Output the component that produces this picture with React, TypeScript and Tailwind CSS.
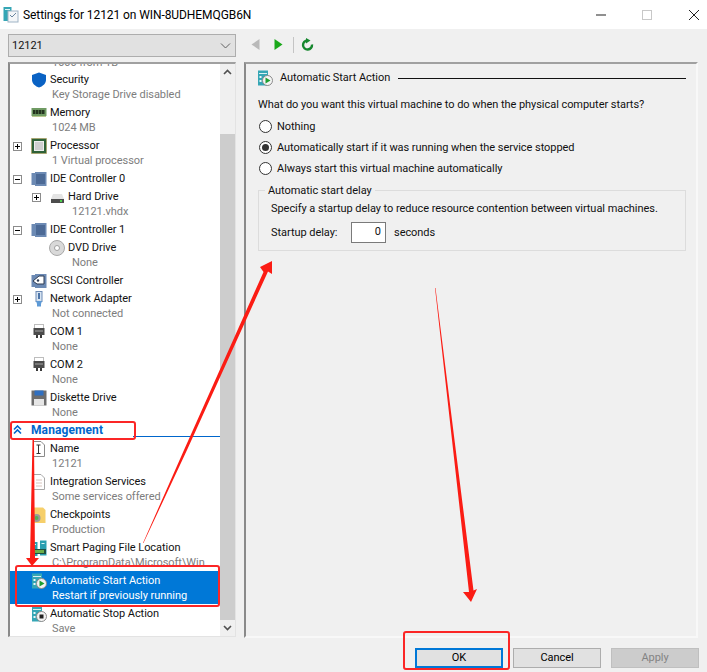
import type { ReactNode } from "react";

type IconName =
  | "shield" | "ram" | "cpu" | "ide" | "hdd" | "dvd" | "scsi" | "nic" | "com"
  | "floppy" | "name" | "integration" | "checkpoint" | "paging" | "start" | "stop";

function ServerGlyph({ badge }: { badge: ReactNode }) {
  return (
    <svg width="16" height="17" viewBox="0 0 16 17">
      <rect x="1" y="0.5" width="10" height="15" fill="#35a6b5" />
      <rect x="2" y="3" width="8" height="1" fill="#d8f0f3" />
      <rect x="2.5" y="6" width="2" height="2" fill="#e8f8fa" />
      <rect x="2.5" y="10" width="2" height="2" fill="#e8f8fa" />
      <circle cx="10.5" cy="10.5" r="5" fill="#f4f4f4" stroke="#8a8a8a" />
      {badge}
    </svg>
  );
}

function TreeIcon({ name }: { name: IconName }) {
  switch (name) {
    case "shield":
      return (
        <svg width="16" height="16" viewBox="0 0 16 16">
          <path d="M8 0.5 L15 3 V8 C15 11.5 11.5 14.5 8 15.5 C4.5 14.5 1 11.5 1 8 V3 Z" fill="#0a62c4" />
        </svg>
      );
    case "ram":
      return (
        <svg width="16" height="16" viewBox="0 0 16 16">
          <rect x="0.5" y="3" width="15" height="8" fill="#6f9a63" />
          <rect x="2" y="5" width="2.5" height="4" fill="#23331f" />
          <rect x="5" y="5" width="2.5" height="4" fill="#23331f" />
          <rect x="8" y="5" width="2.5" height="4" fill="#23331f" />
          <rect x="11" y="5" width="2.5" height="4" fill="#23331f" />
          <rect x="1" y="11" width="14" height="1" fill="#b9c88e" />
        </svg>
      );
    case "cpu":
      return (
        <svg width="16" height="16" viewBox="0 0 16 16">
          <rect x="0.5" y="0.5" width="15" height="15" fill="#2f6238" stroke="#b49a4a" strokeDasharray="1 1" />
          <rect x="3.5" y="3.5" width="9" height="9" fill="#cfcfcf" stroke="#eeeeee" />
        </svg>
      );
    case "ide":
      return (
        <svg width="16" height="16" viewBox="0 0 16 16">
          <path d="M0.5 2 H4 V1 H15.5 V15 H4 V14 H0.5 Z" fill="#6c8ab4" />
          <rect x="5" y="3" width="9" height="10" fill="#4c6a96" />
        </svg>
      );
    case "hdd":
      return (
        <svg width="15" height="16" viewBox="0 0 15 16">
          <path d="M3 5 H12 L14 10 H1 Z" fill="#e4e4e4" />
          <rect x="1" y="10" width="13" height="4" fill="#4d4d4d" />
          <rect x="10" y="11" width="2" height="2" fill="#4fd34f" />
        </svg>
      );
    case "dvd":
      return (
        <svg width="16" height="16" viewBox="0 0 16 16">
          <circle cx="8" cy="8" r="7.5" fill="#d9d9d9" stroke="#a8a8a8" />
          <circle cx="8" cy="8" r="2.5" fill="#ffffff" stroke="#a0a0a0" />
        </svg>
      );
    case "scsi":
      return (
        <svg width="16" height="16" viewBox="0 0 16 16">
          <path d="M0.5 2 H4 V1 H15.5 V15 H4 V14 H0.5 Z" fill="#6c8ab4" />
          <path d="M2 8 L8 3 H13 V11 H6 Z" fill="#ffffff" stroke="#2d3b52" />
          <circle cx="7" cy="7.5" r="1.2" fill="#2d3b52" />
        </svg>
      );
    case "nic":
      return (
        <svg width="16" height="16" viewBox="0 0 16 16">
          <rect x="5" y="0.5" width="6" height="10" fill="#d7e4f2" stroke="#6c8ab4" />
          <rect x="7" y="2" width="2" height="6" fill="#4c74a8" />
          <path d="M5 10 H11 L10 13 V15.5 H6 V13 Z" fill="#5e9ad6" />
        </svg>
      );
    case "com":
      return (
        <svg width="16" height="16" viewBox="0 0 16 16">
          <rect x="3.5" y="0.5" width="9" height="4" fill="#ffffff" stroke="#7a7a7a" strokeDasharray="1 1" />
          <rect x="2.5" y="4" width="11" height="7" fill="#4b4b4b" />
          <rect x="4" y="6.5" width="8" height="1" fill="#a5a5a5" />
          <rect x="5" y="11" width="2" height="3" fill="#3a3a3a" />
          <rect x="9" y="11" width="2" height="3" fill="#3a3a3a" />
        </svg>
      );
    case "floppy":
      return (
        <svg width="16" height="16" viewBox="0 0 16 16">
          <path d="M0.5 0.5 H15.5 V15.5 H0.5 Z" fill="#6d6d6d" />
          <rect x="3.5" y="0.5" width="9" height="5" fill="#2f6fc0" />
          <rect x="3" y="9" width="10" height="6.5" fill="#e6e6e6" />
        </svg>
      );
    case "name":
      return (
        <svg width="12" height="16" viewBox="0 0 12 16">
          <path d="M0.5 0.5 H8 L11.5 4 V15.5 H0.5 Z" fill="#ffffff" stroke="#8a8a8a" />
          <path d="M3.5 4 H7.5 M3.5 12.5 H7.5 M5.5 4 V12.5" fill="none" stroke="#333333" />
        </svg>
      );
    case "integration":
      return (
        <svg width="12" height="16" viewBox="0 0 12 16">
          <path d="M0.5 0.5 H8 L11.5 4 V15.5 H0.5 Z" fill="#ffffff" stroke="#a8a8a8" />
          <path d="M3 6 H9 M3 9 H9 M3 12 H9" fill="none" stroke="#d7c4bd" />
        </svg>
      );
    case "checkpoint":
      return (
        <svg width="14" height="17" viewBox="0 0 14 17">
          <path d="M1 0.5 H11 L13.5 3 V16 H1 Z" fill="#f6cf6a" />
          <circle cx="4.5" cy="11" r="4" fill="#9a9a9a" />
          <circle cx="4.5" cy="11" r="2" fill="#54b054" />
        </svg>
      );
    case "paging":
      return (
        <svg width="16" height="17" viewBox="0 0 16 17">
          <rect x="0.5" y="2" width="6" height="14" fill="#2a9fb0" />
          <rect x="9" y="0.5" width="6.5" height="15" fill="#2a9fb0" />
          <rect x="2" y="4" width="3" height="1" fill="#d9f2f5" />
          <rect x="10.5" y="3" width="3" height="1" fill="#d9f2f5" />
          <rect x="1" y="9" width="14" height="5" fill="#1f4f3f" />
          <rect x="3" y="10" width="10" height="3" fill="#6fb04a" />
        </svg>
      );
    case "start":
      return <ServerGlyph badge={<path d="M8.5 7.5 L13.5 10.5 L8.5 13.5 Z" fill="#1f9e2f" />} />;
    case "stop":
      return <ServerGlyph badge={<rect x="8.5" y="8.5" width="4" height="4" fill="#222222" />} />;
  }
}

function Expander({ open }: { open: boolean }) {
  return (
    <span className="relative block w-[9px] h-[9px] border border-[#8c8c8c] bg-white">
      <span className="absolute left-[1px] top-[3px] w-[5px] h-px bg-black" />
      {!open && <span className="absolute left-[3px] top-[1px] w-px h-[5px] bg-black" />}
    </span>
  );
}

interface TreeItem {
  title: string;
  sub?: string;
  icon: IconName;
  toggle?: "open" | "closed";
  nested?: boolean;
  selected?: boolean;
}

const hardwareItems: TreeItem[] = [
  { title: "Security", sub: "Key Storage Drive disabled", icon: "shield" },
  { title: "Memory", sub: "1024 MB", icon: "ram" },
  { title: "Processor", sub: "1 Virtual processor", icon: "cpu", toggle: "closed" },
  { title: "IDE Controller 0", icon: "ide", toggle: "open" },
  { title: "Hard Drive", sub: "12121.vhdx", icon: "hdd", toggle: "closed", nested: true },
  { title: "IDE Controller 1", icon: "ide", toggle: "open" },
  { title: "DVD Drive", sub: "None", icon: "dvd", nested: true },
  { title: "SCSI Controller", icon: "scsi" },
  { title: "Network Adapter", sub: "Not connected", icon: "nic", toggle: "closed" },
  { title: "COM 1", sub: "None", icon: "com" },
  { title: "COM 2", sub: "None", icon: "com" },
  { title: "Diskette Drive", sub: "None", icon: "floppy" },
];

const managementItems: TreeItem[] = [
  { title: "Name", sub: "12121", icon: "name" },
  { title: "Integration Services", sub: "Some services offered", icon: "integration" },
  { title: "Checkpoints", sub: "Production", icon: "checkpoint" },
  { title: "Smart Paging File Location", sub: "C:\\ProgramData\\Microsoft\\Win", icon: "paging" },
  { title: "Automatic Start Action", sub: "Restart if previously running", icon: "start", selected: true },
  { title: "Automatic Stop Action", sub: "Save", icon: "stop" },
];

function TreeRow({ item }: { item: TreeItem }) {
  const textColor = item.selected ? "text-white" : "text-[#111111]";
  const subColor = item.selected ? "text-white" : "text-[#7d7d7d]";
  return (
    <div className={item.selected ? "bg-[#0078d7]" : ""}>
      <div className="flex items-center h-[18px] pt-[2px]">
        <div className={item.nested ? "w-[22px] shrink-0" : "w-[3px] shrink-0"} />
        <div className={`${item.nested ? "w-[14px]" : "w-[15px]"} shrink-0`}>{item.toggle && <Expander open={item.toggle === "open"} />}</div>
        <div className="w-[22px] shrink-0 flex justify-center"><TreeIcon name={item.icon} /></div>
        <span className={`whitespace-nowrap ${textColor}`}>{item.title}</span>
      </div>
      {item.sub && (
        <div className={`-mt-[1px] h-[16px] leading-[15px] whitespace-nowrap ${subColor} ${item.nested ? "pl-[62px]" : "pl-[42px]"}`}>
          {item.sub}
        </div>
      )}
    </div>
  );
}

function TreePanel() {
  return (
    <div className="relative mt-[5px] h-[575px] border-t-2 border-l-2 border-r border-b border-t-[#a0a0a0] border-l-[#8a8a8a] border-r-[#e3e3e3] border-b-[#e3e3e3] bg-white overflow-hidden flex">
      <div className="flex-1 min-w-0 overflow-hidden">
        {/* previous item, scrolled nearly out of view */}
        <div className="-mt-[9px] h-[15px] leading-[15px] pl-[42px] whitespace-nowrap text-[#7d7d7d]">1000 from 1B</div>
        {hardwareItems.map((item) => (
          <TreeRow key={item.title} item={item} />
        ))}
        <div className="flex items-center h-[18px] pl-[3px]">
          <svg width="9" height="10" viewBox="0 0 9 10" className="mr-[9px]">
            <path d="M1 4.5 L4.5 1 L8 4.5 M1 8.5 L4.5 5 L8 8.5" fill="none" stroke="#0066cc" strokeWidth="1.6" />
          </svg>
          <span className="font-bold text-[12px] text-[#0066cc] tracking-[0.1px]">Management</span>
          <div className="flex-1 h-px bg-[#0066cc] mt-[13px] ml-[30px]" />
        </div>
        {managementItems.map((item) => (
          <TreeRow key={item.title} item={item} />
        ))}
      </div>
      <div className="w-[15px] shrink-0 bg-[#f0f0f0] flex flex-col">
        <div className="h-[16px] flex items-center justify-center">
          <svg width="9" height="6" viewBox="0 0 9 6"><path d="M1 5 L4.5 1.5 L8 5" fill="none" stroke="#505050" strokeWidth="1.6" /></svg>
        </div>
        <div className="h-[54px]" />
        <div className="flex-1 bg-[#cdcdcd]" />
        <div className="h-[16px] flex items-center justify-center">
          <svg width="9" height="6" viewBox="0 0 9 6"><path d="M1 1 L4.5 4.5 L8 1" fill="none" stroke="#505050" strokeWidth="1.6" /></svg>
        </div>
      </div>
    </div>
  );
}

function Radio({ label, checked }: { label: string; checked?: boolean }) {
  return (
    <div className="flex items-center h-[21px]">
      <span className="w-[13px] h-[13px] rounded-full border border-[#333333] bg-white flex items-center justify-center">
        {checked && <span className="w-[7px] h-[7px] rounded-full bg-[#333333]" />}
      </span>
      <span className="ml-[5px] whitespace-nowrap">{label}</span>
    </div>
  );
}

function DialogButton({ label, variant }: { label: string; variant?: "default" | "disabled" }) {
  const look =
    variant === "default"
      ? "border-2 border-[#0078d7] bg-[#e1e1e1] text-black"
      : variant === "disabled"
        ? "border border-[#bfbfbf] bg-[#cccccc] text-[#838383]"
        : "border border-[#adadad] bg-[#e1e1e1] text-black";
  return <div className={`w-[88px] h-[20px] flex items-center justify-center ${look}`}>{label}</div>;
}

function Annotations() {
  return (
    <svg className="absolute inset-0 pointer-events-none" width="707" height="672" viewBox="0 0 707 672">
      <g fill="none" stroke="#fb2626" strokeWidth="2">
        <rect x="11" y="422" width="124" height="17" rx="2" />
        <rect x="16" y="566" width="203" height="40" rx="2" />
        <rect x="404" y="632" width="105" height="37" rx="2" />
      </g>
      <g fill="#fb1c14">
        {/* down from Management */}
        <path d="M32.5 440 L34 440 L35 558 L39 558 L32 566 L26 558 L30 558 Z" />
        {/* long arrow up to the right panel */}
        <path d="M143 543 L184 450 L263.5 272 L260 267 L272 261 L272 274 L268 271.5 L187 450 L143.5 543 Z" />
        {/* down to OK */}
        <path d="M435 288 L452 440 L469 592 L463 592 L471 602 L477 589 L473.5 590.5 L454.5 440 L435.5 288 Z" />
      </g>
    </svg>
  );
}

export default function App() {
  return (
    <div className="relative w-[707px] h-[672px] overflow-hidden bg-[#f0f0f0] font-['Roboto',sans-serif] text-[11px] tracking-[-0.05px] leading-[18px] text-[#111111]">
      <div className="h-[29px] bg-white flex items-center pl-[3px] pr-[7px]">
        <svg width="16" height="17" viewBox="0 0 16 17">
          <rect x="0.5" y="1" width="8" height="14" fill="#35a6b5" />
          <rect x="2" y="3" width="5" height="1" fill="#e0f5f7" />
          <rect x="5" y="5" width="10" height="11" fill="#f4f6f8" stroke="#9fb4c6" />
          <path d="M7 9 L9 11 L13 7" fill="none" stroke="#6a86a0" />
        </svg>
        <span className="ml-[4px] text-[12px] tracking-[-0.08px] whitespace-nowrap text-black">Settings for 12121 on WIN-8UDHEMQGB6N</span>
        <div className="flex-1" />
        <svg width="11" height="2" viewBox="0 0 11 2" className="mr-[35px]"><rect width="10" height="1" y="0.5" fill="#222222" /></svg>
        <svg width="10" height="10" viewBox="0 0 10 10" className="mr-[36px]"><rect x="0.5" y="0.5" width="9" height="9" fill="none" stroke="#c8c8c8" /></svg>
        <svg width="12" height="12" viewBox="0 0 12 12"><path d="M1 1 L11 11 M11 1 L1 11" stroke="#222222" /></svg>
      </div>

      <div className="flex pl-[8px] pr-[9px]">
        <div className="w-[228px] shrink-0 pt-[5px]">
          <div className="h-[23px] border border-[#adadad] bg-[#e1e1e1] flex items-center justify-between pl-[3px] pr-[4px]">
            <span>12121</span>
            <svg width="11" height="6" viewBox="0 0 11 6"><path d="M1 0.5 L5.5 5 L10 0.5" fill="none" stroke="#606060" /></svg>
          </div>
          <TreePanel />
        </div>

        <div className="ml-[8px] flex-1 min-w-0">
          <div className="h-[33px] flex items-center pl-[7px] pb-[2px]">
            <svg width="9" height="11" viewBox="0 0 9 11" className="mr-[14px]"><path d="M8.5 0 V11 L0.5 5.5 Z" fill="#b9b9b9" /></svg>
            <svg width="9" height="11" viewBox="0 0 9 11" className="mr-[10px]"><path d="M0.5 0 V11 L8.5 5.5 Z" fill="#1aa81a" /></svg>
            <div className="w-px h-[16px] bg-[#c4c4c4] mr-[7px]" />
            <svg width="13" height="13" viewBox="0 0 13 13">
              <path d="M6.5 2.5 A4.5 4.5 0 1 0 11 6.5" fill="none" stroke="#16872e" strokeWidth="2.4" />
              <path d="M5 0 L9.5 2.5 L5 5.5 Z" fill="#16872e" />
            </svg>
          </div>
          <div className="h-[576px] border-2 border-t-[#a0a0a0] border-l-[#8a8a8a] border-r-[#f8f8f8] border-b-[#f8f8f8] pt-[4px] pl-[12px] pr-[10px]">
            <div className="flex items-center h-[20px] -ml-[1px]">
              <ServerGlyph badge={<path d="M8.5 7.5 L13.5 10.5 L8.5 13.5 Z" fill="#1f9e2f" />} />
              <span className="ml-[7px] whitespace-nowrap">Automatic Start Action</span>
              <div className="flex-1 h-px bg-[#111111] ml-[8px]" />
            </div>
            <p className="mt-[8px] h-[18px] whitespace-nowrap">What do you want this virtual machine to do when the physical computer starts?</p>
            <div className="mt-[2px] pl-[1px]">
              <Radio label="Nothing" />
              <Radio label="Automatically start if it was running when the service stopped" checked />
              <Radio label="Always start this virtual machine automatically" />
            </div>
            <div className="relative mt-[11px] h-[61px] border border-[#dcdcdc] pl-[12px] pt-[9px]">
              <span className="absolute left-[6px] -top-[9px] bg-[#f0f0f0] px-[3px] whitespace-nowrap">Automatic start delay</span>
              <p className="whitespace-nowrap">Specify a startup delay to reduce resource contention between virtual machines.</p>
              <div className="flex items-center mt-[4px]">
                <span className="w-[80px] whitespace-nowrap">Startup delay:</span>
                <div className="w-[35px] h-[21px] border border-[#7a7a7a] bg-white text-right pr-[4px]">0</div>
                <span className="ml-[8px]">seconds</span>
              </div>
            </div>
          </div>
        </div>
      </div>

      <div className="flex justify-end gap-[10px] pr-[8px] mt-[10px]">
        <DialogButton label="OK" variant="default" />
        <DialogButton label="Cancel" />
        <DialogButton label="Apply" variant="disabled" />
      </div>

      <Annotations />
    </div>
  );
}
